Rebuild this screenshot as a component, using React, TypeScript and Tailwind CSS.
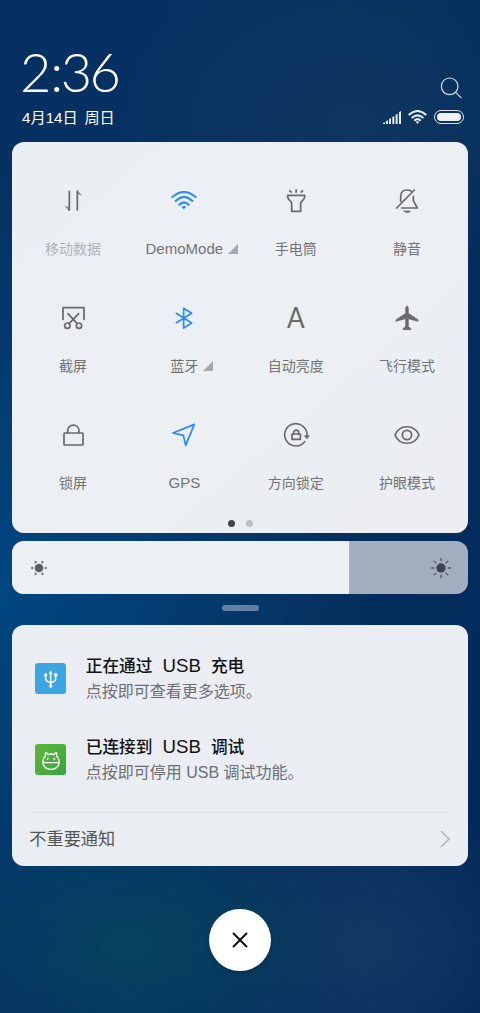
import React from 'react';
import clsx from 'clsx';

const Svg = ({ children, className }: { children: React.ReactNode; className?: string }) => (
  <svg
    viewBox="0 0 90 90"
    className={clsx('w-[30px] h-[30px] block', className)}
    fill="none"
    stroke="currentColor"
    strokeWidth="5.2"
    strokeLinecap="round"
    strokeLinejoin="round"
  >
    {children}
  </svg>
);

const icons = {
  data: (
    <Svg>
      <path d="M34 14V74M58 74V14" strokeLinecap="butt" />
      <path d="M22 60L34 66V74ZM70 28L58 22V14Z" fill="currentColor" strokeWidth="1" />
    </Svg>
  ),
  wifi: (
    <Svg>
      <path d="M10 33Q45 3 80 33M20 45Q45 21 70 45M31 56Q45 42 59 56" strokeWidth="6.2" />
      <path d="M40 63Q45 59 50 63L45 68Z" fill="currentColor" strokeWidth="3" />
    </Svg>
  ),
  torch: (
    <Svg>
      <path d="M20 28H71V32C71 43 59 44 59 52V76H32V52C32 44 20 43 20 32Z" />
      <path d="M45.500 10V20M25 13L32 20M66 13L59 20" strokeLinecap="butt" />
    </Svg>
  ),
  mute: (
    <Svg>
      <path d="M14 66L67 12M26 46V32C26 19 34 12 45 12C50 12 54 13 57 15M64 31V44L76 66H29" />
      <path d="M36 75H55C53 81 38 81 36 75Z" fill="currentColor" strokeWidth="2" />
    </Svg>
  ),
  screenshot: (
    <Svg>
      <path d="M15 49V14H78V49M30 32L57 61M62 32L34 61" />
      <circle cx="28" cy="68" r="8" />
      <circle cx="63" cy="68" r="8" />
    </Svg>
  ),
  bluetooth: (
    <Svg>
      <path d="M22 31L68 60L44 75V16L68 31L22 59" />
    </Svg>
  ),
  auto: <span className="-mt-[2px] font-['Lato'] font-normal text-[29px] leading-[30px] scale-x-90">A</span>,
  plane: (
    <Svg>
      <path
        d="M45 10C48 10 49 13 49 17V31L78 50V55L49 47V71L57 77V80H33V77L41 71V47L12 55V50L41 31V17C41 13 42 10 45 10Z"
        fill="currentColor"
        strokeWidth="2"
      />
    </Svg>
  ),
  lock: (
    <Svg>
      <rect x="18" y="39" width="57" height="36" rx="2" />
      <path d="M29 39V32C29 10 63 10 63 32V39" />
    </Svg>
  ),
  gps: (
    <Svg>
      <path d="M12 39L76 13L50 76L43 46Z" />
    </Svg>
  ),
  rotate: (
    <Svg>
      <path d="M71 65A33.500 33.500 0 1 1 78 46" strokeWidth="4.8" />
      <path d="M71 47H85L78 56Z" fill="currentColor" strokeWidth="2" />
      <rect x="33" y="42" width="25" height="16" />
      <path d="M38 42V38C38 28 53 28 53 38V42" />
    </Svg>
  ),
  eye: (
    <Svg>
      <path d="M9 45C23 12 67 12 81 45C67 78 23 78 9 45Z" />
      <circle cx="45" cy="45" r="14" />
    </Svg>
  ),
};

type Tile = { icon: keyof typeof icons; label: string; on?: boolean; off?: boolean; more?: boolean };

const tiles: Tile[] = [
  { icon: 'data', label: '移动数据', off: true },
  { icon: 'wifi', label: 'DemoMode', on: true, more: true },
  { icon: 'torch', label: '手电筒' },
  { icon: 'mute', label: '静音' },
  { icon: 'screenshot', label: '截屏' },
  { icon: 'bluetooth', label: '蓝牙', on: true, more: true },
  { icon: 'auto', label: '自动亮度' },
  { icon: 'plane', label: '飞行模式' },
  { icon: 'lock', label: '锁屏' },
  { icon: 'gps', label: 'GPS', on: true },
  { icon: 'rotate', label: '方向锁定' },
  { icon: 'eye', label: '护眼模式' },
];

const QuickTile = ({ icon, label, on, off, more }: Tile) => {
  const latin = /^[A-Za-z]+$/.test(label);
  return (
    <div className="flex flex-col items-center">
      <div className={clsx('h-[30px] flex items-center justify-center', on ? 'text-[#268cfa]' : 'text-[#686a6c]')}>
        {icons[icon]}
      </div>
      <div
        className={clsx(
          'relative mt-[23px] h-5 leading-5 whitespace-nowrap',
          latin ? 'text-[15px]' : 'text-[14px]',
          off ? 'text-[#b1b4b7]' : 'text-[#717375]',
        )}
      >
        {label}
        {more && (
          <svg viewBox="0 0 10 10" className="absolute left-full top-[5px] ml-[5px] w-[10px] h-[10px]" fill="#a5a8aa">
            <path d="M10 0V10H0Z" />
          </svg>
        )}
      </div>
    </div>
  );
};

const StatusIcons = () => (
  <div className="flex items-center">
    <svg viewBox="0 0 54 39" className="w-[18px] h-[13px]" fill="#e6ebf2">
      <path d="M0 39V36L6 33V39ZM9 39V31L15 28V39ZM18 39V25L24 22V39ZM28 39V18L34 15V39ZM38 39V11L44 8V39ZM48 39V4L54 0V39Z" />
    </svg>
    <svg viewBox="0 0 57 42" className="ml-[7px] w-[19px] h-[14px]" fill="none" stroke="#e6ebf2" strokeWidth="6">
      <path d="M2 15Q28.500 -9 55 15M11 24Q28.500 8 46 24M19 32Q28.500 23 38 32" />
      <path d="M24 36Q28.500 32 33 36L28.500 41Z" fill="#e6ebf2" strokeWidth="1" />
    </svg>
    <div className="ml-[7px] w-[30px] h-[14px] rounded-full border-[1.5px] border-[#dfe6ee] flex items-center justify-center">
      <div className="w-6 h-[8px] rounded-full bg-[#eef1f5]" />
    </div>
  </div>
);

const UsbIcon = () => (
  <div className="w-[31px] h-[31px] rounded-[3px] bg-[#3da5e0]">
    <svg viewBox="0 0 93 93" className="w-full h-full" fill="none" stroke="#fff" strokeWidth="4.6">
      <path d="M47 28V70M32 37V46C32 55 37 58 47 59C57 58 62 55 62 46V37" />
      <path d="M47 22L53 32H41Z" fill="#fff" stroke="none" />
      <circle cx="47" cy="69" r="5.500" fill="#fff" stroke="none" />
      <circle cx="32" cy="36" r="5" fill="#fff" stroke="none" />
      <path d="M57 31H67V40H57Z" fill="#fff" stroke="none" />
    </svg>
  </div>
);

const DebugIcon = () => (
  <div className="w-[31px] h-[31px] rounded-[3px] bg-linear-to-br from-[#60b637] to-[#38a640]">
    <svg viewBox="0 0 93 93" className="w-full h-full" fill="none" stroke="#fff" strokeWidth="4" strokeLinejoin="round">
      <path d="M31 36L31 27Q32 24 36 28L39 32Q48 28 57 32L60 28Q64 24 65 27V36C73 44 75 58 68 67C59 79 37 79 28 67C21 58 23 44 31 36ZM25 56H71" />
      <circle cx="38" cy="44" r="3" fill="#fff" stroke="none" />
      <circle cx="58" cy="44" r="3" fill="#fff" stroke="none" />
    </svg>
  </div>
);

const Notice = ({ icon, before, after, children }: { icon: React.ReactNode; before: string; after: string; children: React.ReactNode }) => (
  <div className="flex items-center h-[54px] pl-[23px]">
    {icon}
    <div className="ml-[19.500px] pt-px whitespace-nowrap">
      <div className="flex h-[26px] leading-[26px] items-baseline text-[16.700px] font-medium text-[#111213]">
        <span>{before}</span>
        <span className="ml-[10px] mr-[10px] text-[18.700px] font-normal">USB</span>
        <span>{after}</span>
      </div>
      <div className="h-[26px] leading-[26px] text-[16px] text-[#6d6f72]">{children}</div>
    </div>
  </div>
);

const App = () => {
  return (
    <main className="w-[480px] h-[1013px] overflow-hidden flex flex-col items-center font-['Liberation_Sans','Noto_Sans_CJK_SC',sans-serif] bg-[radial-gradient(ellipse_230px_140px_at_130px_945px,#05425f_0%,transparent_100%),radial-gradient(ellipse_180px_150px_at_370px_945px,#143863_0%,transparent_100%),radial-gradient(ellipse_230px_170px_at_350px_125px,#10365f_0%,transparent_100%),radial-gradient(ellipse_340px_420px_at_0px_590px,#004681_0%,transparent_100%),linear-gradient(100deg,#063063_0%,#06315f_60%,#02285b_100%)]">
      <header className="w-full h-[142px] pl-[22px] pr-4 flex justify-between">
        <div className="text-white">
          <h1 className="mt-[44px] h-[56px] leading-[56px] font-['Lato'] font-light text-[54px] tracking-[-2.5px] whitespace-nowrap -ml-[2px]">
            2<span className="ml-[1.500px]">:</span>36
          </h1>
          <p className="mt-[7px] leading-[22px] text-[15.200px] [word-spacing:2.500px] whitespace-nowrap">4月14日 周日</p>
        </div>
        <div className="flex flex-col items-end pt-[77px]">
          <svg viewBox="0 0 66 66" className="mr-[2px] w-[22px] h-[22px]" fill="none" stroke="#d5dde7" strokeWidth="3.500" strokeLinecap="round">
            <circle cx="29" cy="28" r="25" />
            <path d="M47 46L63 62" />
          </svg>
          <div className="mt-[11px]">
            <StatusIcons />
          </div>
        </div>
      </header>

      {/* Quick settings */}
      <section className="w-[455.500px] h-[391px] shrink-0 px-[5px] pt-11 rounded-xl bg-linear-to-br from-[#eaeff4] via-[#ecf0f3] to-[#ebedf1]">
        <div className="grid grid-cols-4 gap-y-[44px]">
          {tiles.map((tile) => (
            <QuickTile key={tile.label} {...tile} />
          ))}
        </div>
        <div className="mt-[27px] flex justify-center gap-[11px]">
          <span className="w-[7px] h-[7px] rounded-full bg-[#434648]" />
          <span className="w-[7px] h-[7px] rounded-full bg-[#bdc0c4]" />
        </div>
      </section>

      {/* Brightness slider */}
      <section className="mt-[8px] w-[455.500px] h-[53px] shrink-0 rounded-xl overflow-hidden flex bg-[#a3afbe]">
        <div className="w-[336.500px] h-full pl-[17.500px] flex items-center bg-[#ecf0f3] text-[#5b5e60]">
          <svg viewBox="-9 -9 18 18" className="w-[18px] h-[18px]" fill="currentColor">
            <circle r="4.300" />
            {[0, 60, 120, 180, 240, 300].map((a) => (
              <circle key={a} cx="6.800" r="1.300" transform={`rotate(${a})`} opacity="0.75" />
            ))}
          </svg>
        </div>
        <div className="flex-1 flex items-center justify-end pr-[16px] text-[#40464c]">
          <svg viewBox="-11 -11 22 22" className="w-[22px] h-[22px]" fill="currentColor">
            <circle r="4.700" />
            {[0, 45, 90, 135, 180, 225, 270, 315].map((a) => (
              <path key={a} d="M7.200 0H9.700" stroke="currentColor" strokeWidth="1.300" strokeLinecap="round" transform={`rotate(${a})`} opacity="0.8" />
            ))}
          </svg>
        </div>
      </section>

      <div className="mt-[11px] w-[37px] h-[6px] shrink-0 rounded-full bg-[#6180a3]" />

      {/* Notifications */}
      <section className="mt-[14px] w-[455.500px] h-[241px] shrink-0 rounded-xl bg-[#eaedf2] pt-[26px] flex flex-col">
        <Notice icon={<UsbIcon />} before="正在通过" after="充电">
          点按即可查看更多选项。
        </Notice>
        <div className="h-[27px]" />
        <Notice icon={<DebugIcon />} before="已连接到" after="调试">
          点按即可停用 USB 调试功能。
        </Notice>
        <div className="mt-[26px] mx-[17px] h-px bg-[#dfe2e6]" />
        <div className="flex-1 pl-[17px] pr-[18px] flex items-center justify-between text-[17.200px] text-[#535557]">
          <span>不重要通知</span>
          <svg viewBox="0 0 10 18" className="-mt-[2px] w-[10px] h-[18px]" fill="none" stroke="#b5b8bc" strokeWidth="1.700">
            <path d="M1 1L9 9L1 17" />
          </svg>
        </div>
      </section>

      <button className="mt-[43px] w-[62px] h-[62px] shrink-0 rounded-full bg-white flex items-center justify-center shadow-md">
        <svg viewBox="0 0 16 16" className="w-4 h-4" fill="none" stroke="#111" strokeWidth="2">
          <path d="M1 1L15 15M15 1L1 15" />
        </svg>
      </button>
    </main>
  );
};

export default App;
